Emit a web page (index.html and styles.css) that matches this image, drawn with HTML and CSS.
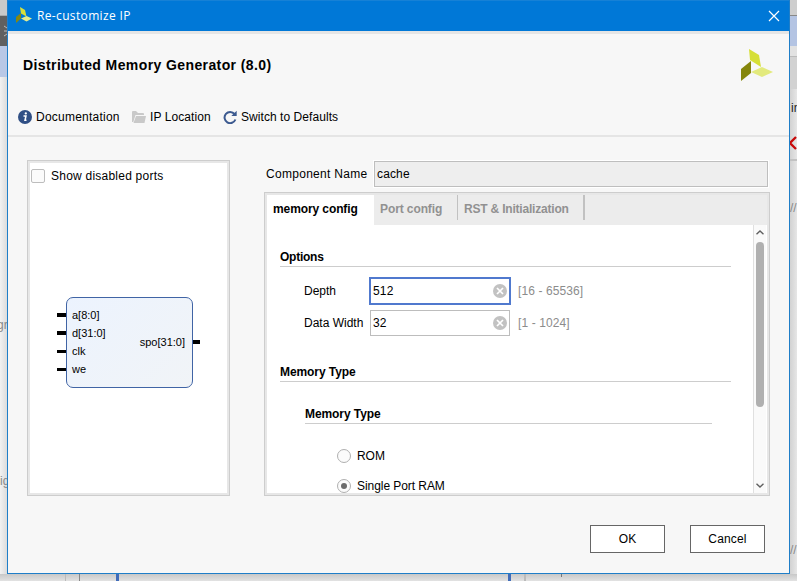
FILE: index.html
```html
<!DOCTYPE html>
<html lang="en">
<head>
<meta charset="utf-8">
<title>Re-customize IP</title>
<link rel="stylesheet" href="styles.css">
</head>
<body>
<div class="desktop" aria-hidden="true">
  <div class="strip left-strip">
    <i class="l-top"></i><i class="l-dark"><svg width="7" height="31" viewBox="0 0 7 31"><path d="M4 10l3 2M4 15h3M4 20l3-2" stroke="#bbb" fill="none"/></svg></i><i class="l-blue"></i>
    <span class="frag frag-gr">gr</span><span class="frag frag-sig">sig</span>
  </div>
  <div class="strip right-strip">
    <i class="r-top"></i><i class="r-blue"></i><i class="r-light"></i><i class="r-tab"></i>
    <span class="frag frag-in">in</span>
    <svg class="frag-x" width="8" height="16" viewBox="0 0 8 16"><path d="M6 2L0 8L6 14" stroke="#c80a0a" stroke-width="2.3" fill="none"/></svg>
    <i class="r-line"></i>
    <span class="frag frag-c1">//</span><span class="frag frag-c2">//</span>
  </div>
  <div class="strip bottom-strip"><i class="b1"></i><i class="b2"></i><i class="b3"></i><i class="b4"></i><i class="b5"></i><i class="b6"></i></div>
</div>
<main class="dialog">
  <header class="titlebar">
    <svg class="app-icon" width="16" height="16" viewBox="0 0 32 32"><path d="M8 0L18 6L21 19L10 13Z" fill="#d8e03a"/><path d="M0 20L10 12V23L0 32Z" fill="#868712"/><path d="M10 23L21 18L32 23L21 29Z" fill="#e6ee8e"/></svg>
    <span class="caption">Re-customize IP</span>
    <svg class="close" width="12" height="12" viewBox="0 0 12 12"><path d="M1 1L11 11M11 1L1 11" stroke="#fff" stroke-width="1.2" fill="none"/></svg>
  </header>
  <section class="head">
    <div class="head-row">
      <h1>Distributed Memory Generator (8.0)</h1>
      <svg class="logo" width="32" height="32" viewBox="0 0 32 32"><path d="M8 0L18 6L20 18L9 11Z" fill="#d6df36"/><path d="M0 20L10 12V24L0 32Z" fill="#85860b"/><path d="M10 23L21 18L32 23L21 28Z" fill="#e3ea7d"/></svg>
    </div>
    <nav class="tools">
      <a class="doc"><svg width="14" height="14" viewBox="0 0 14 14"><circle cx="7" cy="7" r="7" fill="#304f85"/><circle cx="7.8" cy="3.4" r="1.15" fill="#fff"/><path d="M5.5 5.9H8L7 10.3H8.5" stroke="#fff" stroke-width="1.5" fill="none"/></svg><span>Documentation</span></a>
      <a class="loc"><svg width="14" height="12" viewBox="0 0 14 12"><path d="M0 11V1Q0 0 1 0H4L6 2H11Q12 2 12 3V4H3.5L1.3 11Z" fill="#c9c9c9"/><path d="M4 5H14L12.5 12H1.5Z" fill="#c9c9c9"/></svg><span>IP Location</span></a>
      <a class="reset"><svg width="14" height="14" viewBox="0 0 14 14"><path d="M11.5 4A5.6 5.6 0 1 0 12.4 9.5" fill="none" stroke="#3c5a90" stroke-width="2"/><path d="M13.7 .7V6H8.3Z" fill="#3c5a90"/></svg><span>Switch to Defaults</span></a>
    </nav>
  </section>
  <section class="workspace">
    <aside class="panel preview">
      <label class="show"><i class="checkbox"></i><span>Show disabled ports</span></label>
      <div class="block-row">
        <div class="pins"><i></i><i></i><i></i><i></i></div>
        <div class="block">
          <div class="inputs"><span>a[8:0]</span><span>d[31:0]</span><span>clk</span><span>we</span></div>
          <span class="output">spo[31:0]</span>
        </div>
        <i class="pin-out"></i>
      </div>
    </aside>
    <div class="config">
      <div class="name-row"><span class="name-label">Component Name</span><div class="name-input"><span>cache</span></div></div>
      <div class="panel settings">
        <div class="tabs"><div class="tab active"><span class="t1">memory config</span></div><div class="tab port"><span class="t2">Port config</span></div><div class="tab rst"><span class="t3">RST &amp; Initialization</span></div></div>
        <div class="scroller">
          <div class="content">
            <h2 class="options"><span>Options</span></h2>
            <div class="field depth"><span class="flabel">Depth</span><div class="input focus"><span>512</span><svg width="14" height="14" viewBox="0 0 14 14"><circle cx="7" cy="7" r="7" fill="#c2c2c2"/><path d="M4 4L10 10M10 4L4 10" stroke="#fff" stroke-width="1.7"/></svg></div><span class="range">[16 - 65536]</span></div>
            <div class="field"><span class="flabel dw">Data Width</span><div class="input"><span>32</span><svg width="14" height="14" viewBox="0 0 14 14"><circle cx="7" cy="7" r="7" fill="#c2c2c2"/><path d="M4 4L10 10M10 4L4 10" stroke="#fff" stroke-width="1.7"/></svg></div><span class="range">[1 - 1024]</span></div>
            <h2 class="memory"><span>Memory Type</span></h2>
            <h2 class="submemory"><span>Memory Type</span></h2>
            <label class="radio-row"><i class="radio"></i><span class="rom">ROM</span></label>
            <label class="radio-row"><i class="radio checked"></i><span class="spr">Single Port RAM</span></label>
          </div>
          <div class="scrollbar">
            <svg width="8" height="5" viewBox="0 0 8 5"><path d="M.5 4.3L4 1L7.5 4.3" stroke="#606060" stroke-width="1.4" fill="none"/></svg>
            <i class="thumb"></i>
            <svg class="down" width="8" height="5" viewBox="0 0 8 5"><path d="M.5 .7L4 4L7.5 .7" stroke="#606060" stroke-width="1.4" fill="none"/></svg>
          </div>
        </div>
      </div>
    </div>
  </section>
  <footer class="actions"><button>OK</button><button>Cancel</button></footer>
</main>
</body>
</html>
```
FILE: styles.css
```css
* { box-sizing: border-box; }
body { margin: 0; width: 797px; height: 581px; overflow: hidden; position: relative; background: #eee; color: #000; font: 12px/16px "Liberation Sans", Arial, sans-serif; }
h1, h2 { margin: 0; }
i { display: block; font-style: normal; }
svg { display: block; flex: none; }
span { white-space: nowrap; }

/* Application behind the dialog */
.desktop, .strip { position: absolute; }
.desktop { inset: 0; overflow: hidden; }
.strip i { position: absolute; }
.left-strip { left: 0; top: 0; width: 7px; height: 581px; background: linear-gradient(90deg, #f2f2f2, #dcdcdc); overflow: hidden; }
.l-top { width: 7px; height: 16px; background: #c9c9c9; border-bottom: 1px solid #aaa; }
.l-dark { top: 16px; width: 7px; height: 30px; background: #606060; }
.l-blue { top: 46px; width: 7px; height: 31px; background: #b9c8e6; }
.right-strip { left: 790px; top: 0; width: 7px; height: 581px; background: linear-gradient(90deg, #d2d2d2, #e6e6e6); overflow: hidden; }
.r-top { width: 7px; height: 16px; background: #cecece; border-bottom: 1px solid #888; }
.r-blue { top: 16px; width: 7px; height: 30px; background: #b4c4e3; }
.r-light { top: 46px; width: 7px; height: 11px; background: #e2e2e2; border-bottom: 1px solid #bbb; }
.r-tab { top: 57px; width: 7px; height: 32px; background: #d2d2d2; }
.r-line { top: 159px; width: 7px; height: 2px; background: #c2c2c2; }
.frag { position: absolute; color: #888; }
.frag-gr { left: -3px; top: 317px; }
.frag-sig { left: -6px; top: 473px; }
.frag-in { left: 1px; top: 100px; color: #222; }
.frag-x { position: absolute; left: 0; top: 135px; }
.frag-c1 { left: 0; top: 200px; }
.frag-c2 { left: 0; top: 542px; }
.bottom-strip { left: 0; top: 574px; width: 797px; height: 7px; background: linear-gradient(#c8c8c8, #e2e2e2); }
.bottom-strip i { top: 0; height: 7px; width: 1px; background: #bbb; }
.bottom-strip .b1 { left: 65px; }
.bottom-strip .b2 { left: 79px; background: #888; }
.bottom-strip .b3 { left: 116px; width: 3px; background: #416cb9; }
.bottom-strip .b4 { left: 508px; width: 3px; background: #416cb9; }
.bottom-strip .b5 { left: 524px; width: 2px; }
.bottom-strip .b6 { left: 561px; height: 3px; background: #777; }

.dialog { position: relative; margin-left: 7px; width: 783px; height: 574px; border: 1px solid #1f7ec8; border-top: 0; background: #f7f7f7; }
.titlebar { height: 31px; background: #0078d7; border-top: 1px solid #1681d6; display: flex; align-items: center; padding: 0 9px 0 8px; color: #fff; }
.app-icon { margin-top: -2px; }
.caption { font: 12px/16px "Open Sans", sans-serif; margin-left: 5px; letter-spacing: .35px; }
.close { margin-left: auto; }
.head { height: 106px; border-top: 3px solid #e5e5e5; border-bottom: 2px solid #e5e5e5; }
.head-row { height: 64px; padding: 15px 16px 0 15px; display: flex; justify-content: space-between; }
h1 { font-size: 14px; line-height: 16px; margin-top: 8px; letter-spacing: .4px; }
.tools { display: flex; height: 38px; padding: 0 0 0 10px; align-items: center; }
.tools a { display: flex; align-items: center; gap: 4px; }
.doc { width: 114px; letter-spacing: .23px; }
.loc { width: 91px; letter-spacing: .09px; }
.reset { letter-spacing: .06px; }

.workspace { display: flex; gap: 34px; height: 359px; padding: 23px 19px 0; }
.panel { border: 1px solid #cdcdcd; box-shadow: inset 0 0 0 2px #e7e7e7; background: #fff; }
.preview { width: 203px; height: 336px; padding: 8px 3px; }
.show { display: flex; gap: 6px; height: 14px; align-items: center; letter-spacing: .23px; }
.checkbox { width: 14px; height: 14px; border: 1px solid #bdbdbd; border-radius: 2px; background: #fbfbfb; }
.block-row { display: flex; margin: 114px 0 0 26px; }
.pins { width: 9px; padding-top: 17px; display: grid; grid-auto-rows: 3px; row-gap: 15px; align-content: start; }
.pins i { background: #000; }
.pins i:nth-child(-n+2) { height: 4px; margin-top: -1px; }
.block { width: 127px; height: 91px; border: 1px solid #4064a5; border-radius: 7px; background: linear-gradient(135deg, #ecf3fe, #f1f4f7); display: flex; justify-content: space-between; padding: 8px 7px 0 5px; font-size: 11px; line-height: 18px; }
.inputs { display: grid; grid-auto-rows: 18px; align-content: start; }
.output { margin-top: 27px; }
.pin-out { width: 7px; height: 4px; margin-top: 43px; background: #000; }

.config { width: 506px; }
.name-row { display: flex; align-items: center; height: 26px; margin: 1px 0 5px; padding-left: 2px; }
.name-label { width: 108px; letter-spacing: .29px; }
.name-input { width: 394px; height: 26px; border: 1px solid #bebebe; background: #eee; padding: 4px 2px; box-shadow: 0 0 0 1px #fff; letter-spacing: .15px; }
.settings { width: 506px; height: 304px; padding: 2px; overflow: hidden; }
.tabs { height: 30px; display: flex; background: #ececec; font-weight: bold; color: #919191; }
.tab { padding: 6px 0 0 6px; height: 30px; letter-spacing: -.1px; }
.active { width: 107px; background: #fff; color: #000; }
.port { width: 84px; height: 25px; border-right: 1px solid #c1c1c1; }
.rst { width: 127px; height: 25px; border-right: 2px solid #c1c1c1; letter-spacing: -.2px; }
.scroller { display: flex; height: 268px; }
.content { width: 486px; height: 268px; overflow: hidden; padding: 24px 0 0 13px; }
h2 { font-size: 12px; line-height: 16px; height: 18px; width: 451px; border-bottom: 1px solid #cdcdcd; letter-spacing: -.08px; }
.options { letter-spacing: -.25px; }
.field { display: flex; align-items: center; padding-left: 24px; height: 26px; }
.depth { margin: 11px 0 6px; }
.flabel { width: 66px; }
.input { width: 140px; height: 26px; border: 1px solid #bdbdbd; background: #fff; display: flex; align-items: center; justify-content: space-between; padding: 0 2px; letter-spacing: .2px; }
.focus { outline: 1px solid #5079ce; border-color: #5079ce; }
.range { margin-left: 8px; color: #8c8c8c; letter-spacing: .1px; }
.memory { margin-top: 28px; }
.submemory { margin: 24px 0 25px 25px; width: 407px; }
.radio-row { display: flex; align-items: center; gap: 6px; height: 14px; margin: 0 0 16px 57px; letter-spacing: -.06px; }
.radio { width: 14px; height: 14px; border: 1px solid #b0b0b0; border-radius: 50%; background: #fbfbfb; }
.checked { display: flex; align-items: center; justify-content: center; }
.checked::after { content: ""; width: 6px; height: 6px; border-radius: 50%; background: #6b6b6b; }
.scrollbar { width: 13px; height: 268px; border-left: 1px solid #e0e0e0; background: #fafafa; display: flex; flex-direction: column; align-items: center; padding-top: 5px; }
.thumb { width: 8px; height: 165px; border-radius: 4px; background: #b0b0b0; margin-top: 7px; }
.down { margin-top: 76px; }
.actions { display: flex; gap: 25px; justify-content: flex-end; padding: 29px 24px 0 0; }
button { width: 75px; height: 28px; padding: 0; border: 1px solid #666; background: #fff; color: #000; font: 12px/16px "Liberation Sans", Arial, sans-serif; letter-spacing: .15px; }
```
